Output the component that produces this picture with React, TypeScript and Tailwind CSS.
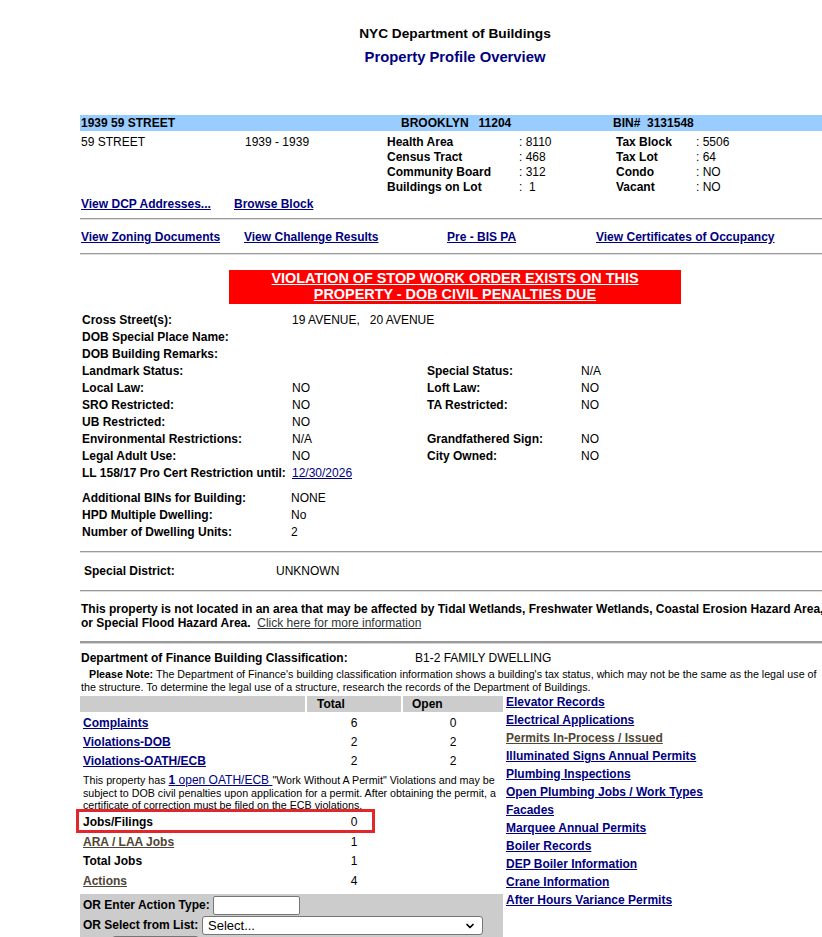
import { ChevronDown } from "lucide-react";

const navLink = "font-bold text-[#000080] underline";
const dimLink = "font-bold text-[#4d4536] underline";

function Rule({ heavy = false }: { heavy?: boolean }) {
  return heavy ? (
    <div className="h-[3px] border-t-2 border-[#9a9a9a] border-b border-b-[#d4d4d4]" />
  ) : (
    <div className="h-[2px] border-t border-[#9a9a9a] border-b border-b-[#dedede]" />
  );
}

const lotRows: [string, string, string, string, string, string][] = [
  ["59 STREET", "1939 - 1939", "Health Area", ": 8110", "Tax Block", ": 5506"],
  ["", "", "Census Tract", ": 468", "Tax Lot", ": 64"],
  ["", "", "Community Board", ": 312", "Condo", ": NO"],
  ["", "", "Buildings on Lot", ":  1", "Vacant", ": NO"],
];

const detailRows: [string, string, string, string][] = [
  ["Cross Street(s):", "19 AVENUE,   20 AVENUE", "", ""],
  ["DOB Special Place Name:", "", "", ""],
  ["DOB Building Remarks:", "", "", ""],
  ["Landmark Status:", "", "Special Status:", "N/A"],
  ["Local Law:", "NO", "Loft Law:", "NO"],
  ["SRO Restricted:", "NO", "TA Restricted:", "NO"],
  ["UB Restricted:", "NO", "", ""],
  ["Environmental Restrictions:", "N/A", "Grandfathered Sign:", "NO"],
  ["Legal Adult Use:", "NO", "City Owned:", "NO"],
];

const buildingRows: [string, string][] = [
  ["Additional BINs for Building:", "NONE"],
  ["HPD Multiple Dwelling:", "No"],
  ["Number of Dwelling Units:", "2"],
];

const recordLinks = [
  "Elevator Records",
  "Electrical Applications",
  "Permits In-Process / Issued",
  "Illuminated Signs Annual Permits",
  "Plumbing Inspections",
  "Open Plumbing Jobs / Work Types",
  "Facades",
  "Marquee Annual Permits",
  "Boiler Records",
  "DEP Boiler Information",
  "Crane Information",
  "After Hours Variance Permits",
];

function CountRow({
  label,
  total,
  open,
  className,
  labelClass,
}: {
  label: string;
  total: string;
  open?: string;
  className: string;
  labelClass: string;
}) {
  return (
    <div className={`flex items-center gap-[2px] ${className}`}>
      <div className={`w-[225px] pl-[3px] ${labelClass}`}>{label}</div>
      <div className="w-[94px] text-center">{total}</div>
      <div className="w-[100px] text-center">{open ?? ""}</div>
    </div>
  );
}

export default function App() {
  return (
    <div className="w-full min-h-[937px] overflow-hidden bg-white font-['Liberation_Sans',Arial,sans-serif] text-[12px] leading-[15px] text-black">
      <div className="ml-[80px] w-[750px]">
        <header className="pt-[26px] text-center">
          <div className="text-[13.7px] font-bold leading-[16px]">NYC Department of Buildings</div>
          <div className="mt-[6px] text-[14.8px] font-bold leading-[18px] text-[#000080]">
            Property Profile Overview
          </div>
        </header>

        {/* address bar */}
        <div className="mt-[49px] flex h-[16px] items-center bg-[#99ccff] font-bold whitespace-pre">
          <div className="w-[321px] pl-[1px]">1939 59 STREET</div>
          <div className="w-[212px]">BROOKLYN   11204</div>
          <div>BIN#  3131548</div>
        </div>

        <div className="mt-[4px] grid grid-cols-[165px_142px_132px_97px_80px_1fr] whitespace-pre">
          {lotRows.map((r, i) => (
            <div key={i} className="contents">
              <div className="h-[15px] pl-[1px]">{r[0]}</div>
              <div>{r[1]}</div>
              <div className="font-bold">{r[2]}</div>
              <div>{r[3]}</div>
              <div className="font-bold">{r[4]}</div>
              <div>{r[5]}</div>
            </div>
          ))}
        </div>

        <div className="mt-[2px] flex h-[15px]">
          <a className={`w-[154px] pl-[1px] ${navLink}`}>
            <span>View DCP Addresses...</span>
          </a>
          <a className={navLink}>Browse Block</a>
        </div>

        <div className="mt-[6px]">
          <Rule />
        </div>

        <div className="mt-[10px] flex h-[15px]">
          <div className="w-[164px] pl-[1px]">
            <a className={navLink}>View Zoning Documents</a>
          </div>
          <div className="w-[203px]">
            <a className={navLink}>View Challenge Results</a>
          </div>
          <div className="w-[149px]">
            <a className={navLink}>Pre - BIS PA</a>
          </div>
          <div>
            <a className={navLink}>View Certificates of Occupancy</a>
          </div>
        </div>

        <div className="mt-[8px]">
          <Rule />
        </div>

        {/* stop work order notice */}
        <div className="mx-auto mt-[15px] flex h-[34px] w-[452px] flex-col items-center bg-[#ff0000] text-[14.4px] font-bold leading-[16px] text-white underline">
          <span>VIOLATION OF STOP WORK ORDER EXISTS ON THIS</span>
          <span>PROPERTY - DOB CIVIL PENALTIES DUE</span>
        </div>

        <div className="mt-[8px] grid grid-cols-[212px_135px_154px_1fr] leading-[17px]">
          {detailRows.map((r, i) => (
            <div key={i} className="contents">
              <div className="h-[17px] pl-[2px] font-bold">{r[0]}</div>
              <div className="whitespace-pre">{r[1]}</div>
              <div className="font-bold">{r[2]}</div>
              <div>{r[3]}</div>
            </div>
          ))}
          <div className="h-[17px] pl-[2px] font-bold">LL 158/17 Pro Cert Restriction until:</div>
          <div>
            <a className="text-[#000080] underline">12/30/2026</a>
          </div>
          <div />
          <div />
        </div>

        <div className="mt-[8px] grid grid-cols-[211px_1fr] leading-[17px]">
          {buildingRows.map(([k, v]) => (
            <div key={k} className="contents">
              <div className="h-[17px] pl-[2px] font-bold">{k}</div>
              <div>{v}</div>
            </div>
          ))}
        </div>

        <div className="mt-[10px]">
          <Rule />
        </div>

        <div className="mt-[11px] flex h-[15px]">
          <div className="w-[196px] pl-[4px] font-bold">Special District:</div>
          <div>UNKNOWN</div>
        </div>

        <div className="mt-[11px]">
          <Rule />
        </div>

        <div className="mt-[10px] pl-[1px] leading-[14px]">
          <div className="whitespace-nowrap font-bold">
            This property is not located in an area that may be affected by Tidal Wetlands, Freshwater Wetlands,
            Coastal Erosion Hazard Area,
          </div>
          <div className="whitespace-pre">
            <span className="font-bold">or Special Flood Hazard Area.</span>
            {"  "}
            <a className="text-[#333333] underline">Click here for more information</a>
          </div>
        </div>

        <div className="mt-[11px]">
          <Rule heavy />
        </div>

        <div className="mt-[7px] flex h-[15px]">
          <div className="w-[335px] pl-[1px] font-bold">Department of Finance Building Classification:</div>
          <div>B1-2 FAMILY DWELLING</div>
        </div>

        <div className="mt-[2px] text-[10.7px] leading-[13px] whitespace-nowrap">
          <div className="pl-[9px]">
            <span className="font-bold">Please Note:</span> The Department of Finance's building classification
            information shows a building's tax status, which may not be the same as the legal use of
          </div>
          <div className="pl-[1px]">
            the structure. To determine the legal use of a structure, research the records of the Department of
            Buildings.
          </div>
        </div>

        {/* counts table and record links */}
        <div className="mt-[2px] flex">
          <div className="relative w-[423px]">
            <div className="flex h-[16px] items-center gap-[2px] font-bold">
              <div className="h-full w-[225px] bg-[#cccccc]" />
              <div className="flex h-full w-[94px] items-center bg-[#cccccc] pl-[10px]">Total</div>
              <div className="flex h-full w-[100px] items-center bg-[#cccccc] pl-[9px]">Open</div>
            </div>

            <div className="mt-[2px]">
              <CountRow label="Complaints" total="6" open="0" className="h-[19px]" labelClass={navLink} />
              <CountRow label="Violations-DOB" total="2" open="2" className="h-[19px]" labelClass={navLink} />
              <CountRow label="Violations-OATH/ECB" total="2" open="2" className="h-[19px]" labelClass={navLink} />
            </div>

            {/* the cell is shorter than its text, so the last line is cut */}
            <div className="mt-[3px] h-[35px] overflow-hidden pl-[3px] text-[10.7px] leading-[12.5px] whitespace-nowrap">
              <div>
                This property has{" "}
                <a className="text-[12px] text-[#000080] underline">
                  <span className="font-bold">1</span> open OATH/ECB{" "}
                </a>
                "Work Without A Permit" Violations and may be
              </div>
              <div>subject to DOB civil penalties upon application for a permit. After obtaining the permit, a</div>
              <div>certificate of correction must be filed on the ECB violations.</div>
            </div>

            <CountRow label="Jobs/Filings" total="0" className="mt-[3px] h-[20px]" labelClass="font-bold" />
            <CountRow label="ARA / LAA Jobs" total="1" className="h-[20px]" labelClass={dimLink} />
            <CountRow label="Total Jobs" total="1" className="h-[18px]" labelClass="font-bold" />
            <CountRow label="Actions" total="4" className="h-[22px]" labelClass={dimLink} />

            {/* action search form */}
            <div className="mt-[2px] h-[60px] bg-[#cccccc] pt-[2px]">
              <div className="flex h-[19px] items-center">
                <label className="w-[133px] pl-[3px] font-bold">OR Enter Action Type:</label>
                <input className="h-[19px] w-[87px] rounded-[2px] border border-[#767676] bg-white px-[2px] text-[12px]" />
              </div>
              <div className="mt-[1px] flex h-[19px] items-center">
                <label className="w-[122px] pl-[3px] font-bold">OR Select from List:</label>
                <div className="flex h-[19px] w-[281px] items-center justify-between rounded-[3px] border border-[#767676] bg-white pl-[5px] pr-[6px] text-[13px]">
                  <span>Select...</span>
                  <ChevronDown size={12} strokeWidth={3.5} />
                </div>
              </div>
              <div className="ml-[32px] mt-[1px] h-[22px] w-[87px] rounded-[3px] border border-[#767676] bg-[#f0f0f0]" />
            </div>

            {/* highlight around the jobs row */}
            <div className="absolute left-[-4px] top-[113px] h-[24px] w-[299px] border-[3px] border-[#e3262b]" />
          </div>

          <div className="-mt-[3px] flex flex-col pl-[3px] leading-[18px]">
            {recordLinks.map((t) => (
              <a key={t} className={`w-fit ${t.startsWith("Permits") ? dimLink : navLink}`}>
                {t}
              </a>
            ))}
          </div>
        </div>
      </div>
    </div>
  );
}
